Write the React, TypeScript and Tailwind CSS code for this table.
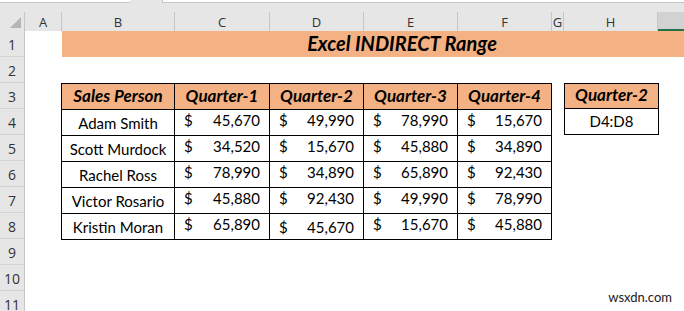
const cols = [
  { label: "A", w: "w-[37px]" },
  { label: "B", w: "w-[113px]" },
  { label: "C", w: "w-[95px]" },
  { label: "D", w: "w-[94px]" },
  { label: "E", w: "w-[94px]" },
  { label: "F", w: "w-[94px]" },
  { label: "G", w: "w-[12px]" },
  { label: "H", w: "w-[94px]" },
];

const rows = [
  { name: "Adam Smith", q: ["45,670", "49,990", "78,990", "15,670"] },
  { name: "Scott Murdock", q: ["34,520", "15,670", "45,880", "34,890"] },
  { name: "Rachel Ross", q: ["78,990", "34,890", "65,890", "92,430"] },
  { name: "Victor Rosario", q: ["45,880", "92,430", "49,990", "78,990"] },
  { name: "Kristin Moran", q: ["65,890", "45,670", "15,670", "45,880"] },
];

const heads = ["Sales Person", "Quarter-1", "Quarter-2", "Quarter-3", "Quarter-4"];

const Money = ({ v, low }: { v: string; low?: boolean }) => (
  <div className={`flex h-full items-end justify-between px-[9px] text-[15px] text-black ${low ? "pb-[1px]" : "pb-[4px]"}`}>
    <span>$</span>
    <span>{v}</span>
  </div>
);

export default function App() {
  return (
    <div className="w-[684px] h-[311px] overflow-hidden bg-white font-['Lato',sans-serif] text-black">
      {/* formula bar remnants */}
      <div className="h-[12px] bg-[#e6e6e6] flex">
        <div className="w-[130px] h-[3px] bg-white border-b border-[#c6c6c6]" />
        <div className="ml-[32px] flex-1 h-[3px] bg-white border-b border-l border-[#c6c6c6]" />
      </div>

      {/* column headers */}
      <div className="flex h-[19px] bg-[#e6e6e6] font-['Open_Sans',sans-serif] text-[13px] text-[#333]">
        <div className="w-[25px] border-r border-[#c6c6c6] flex items-end justify-end pr-[3px] pb-[3px]">
          <svg width="11" height="11" viewBox="0 0 11 11">
            <polygon points="11,0 11,11 0,11" fill="#b5b5b5" />
          </svg>
        </div>
        {cols.map((c) => (
          <div key={c.label} className={`${c.w} shrink-0 border-r border-[#c6c6c6] flex items-center justify-center leading-none pt-[2px]`}>
            {c.label}
          </div>
        ))}
        <div className="flex-1 bg-[#d2d2d2] border-b-2 border-[#217346]" />
      </div>

      <div className="flex">
        {/* row numbers */}
        <div className="w-[25px] shrink-0 bg-[#e6e6e6] border-r border-[#c6c6c6] font-['Open_Sans',sans-serif] text-[14px] text-[#333]">
          {Array.from({ length: 11 }, (_, i) => (
            <div key={i} className="h-[26px] border-b border-[#d4d4d4] flex items-center justify-center pt-[2px]">
              {i + 1}
            </div>
          ))}
        </div>

        {/* sheet */}
        <div className="flex-1 overflow-hidden">
          <div className="h-[26px] flex">
            <div className="ml-[37px] w-[680px] shrink-0 bg-[#f4b183] flex items-end justify-center pb-[1px] text-[20px] font-bold italic leading-none">
              <span className="pb-[3px]">Excel INDIRECT Range</span>
            </div>
          </div>
          <div className="h-[26px]" />

          <div className="flex items-start">
            <div className="ml-[36px] grid grid-cols-[113px_95px_94px_94px_94px] border-l border-t border-black">
              {heads.map((h) => (
                <div key={h} className="h-[26px] bg-[#f4b183] border-r border-b border-black flex items-end justify-center pb-[1px] text-[17px] font-bold italic">
                  {h}
                </div>
              ))}
              {rows.map((r, ri) => (
                <div key={r.name} className="contents">
                  <div className="h-[26px] border-r border-b border-black flex items-end justify-center pb-[1px] text-[15px]">
                    {r.name}
                  </div>
                  {r.q.map((v, qi) => (
                    <div key={qi} className="h-[26px] border-r border-b border-black">
                      <Money v={v} low={ri === 4 && qi === 1} />
                    </div>
                  ))}
                </div>
              ))}
            </div>

            <div className="ml-[12px] w-[95px] border border-black">
              <div className="h-[25px] bg-[#f4b183] border-b border-black flex items-end justify-center pb-[1px] text-[17px] font-bold italic">
                Quarter-2
              </div>
              <div className="h-[25px] flex items-end justify-center pb-[2px] text-[15px]">
                D4:D8
              </div>
            </div>
          </div>

          <div className="flex justify-end pr-[12px] pt-[51px] text-[13px] text-[#222] leading-none">
            wsxdn.com
          </div>
        </div>
      </div>
    </div>
  );
}
